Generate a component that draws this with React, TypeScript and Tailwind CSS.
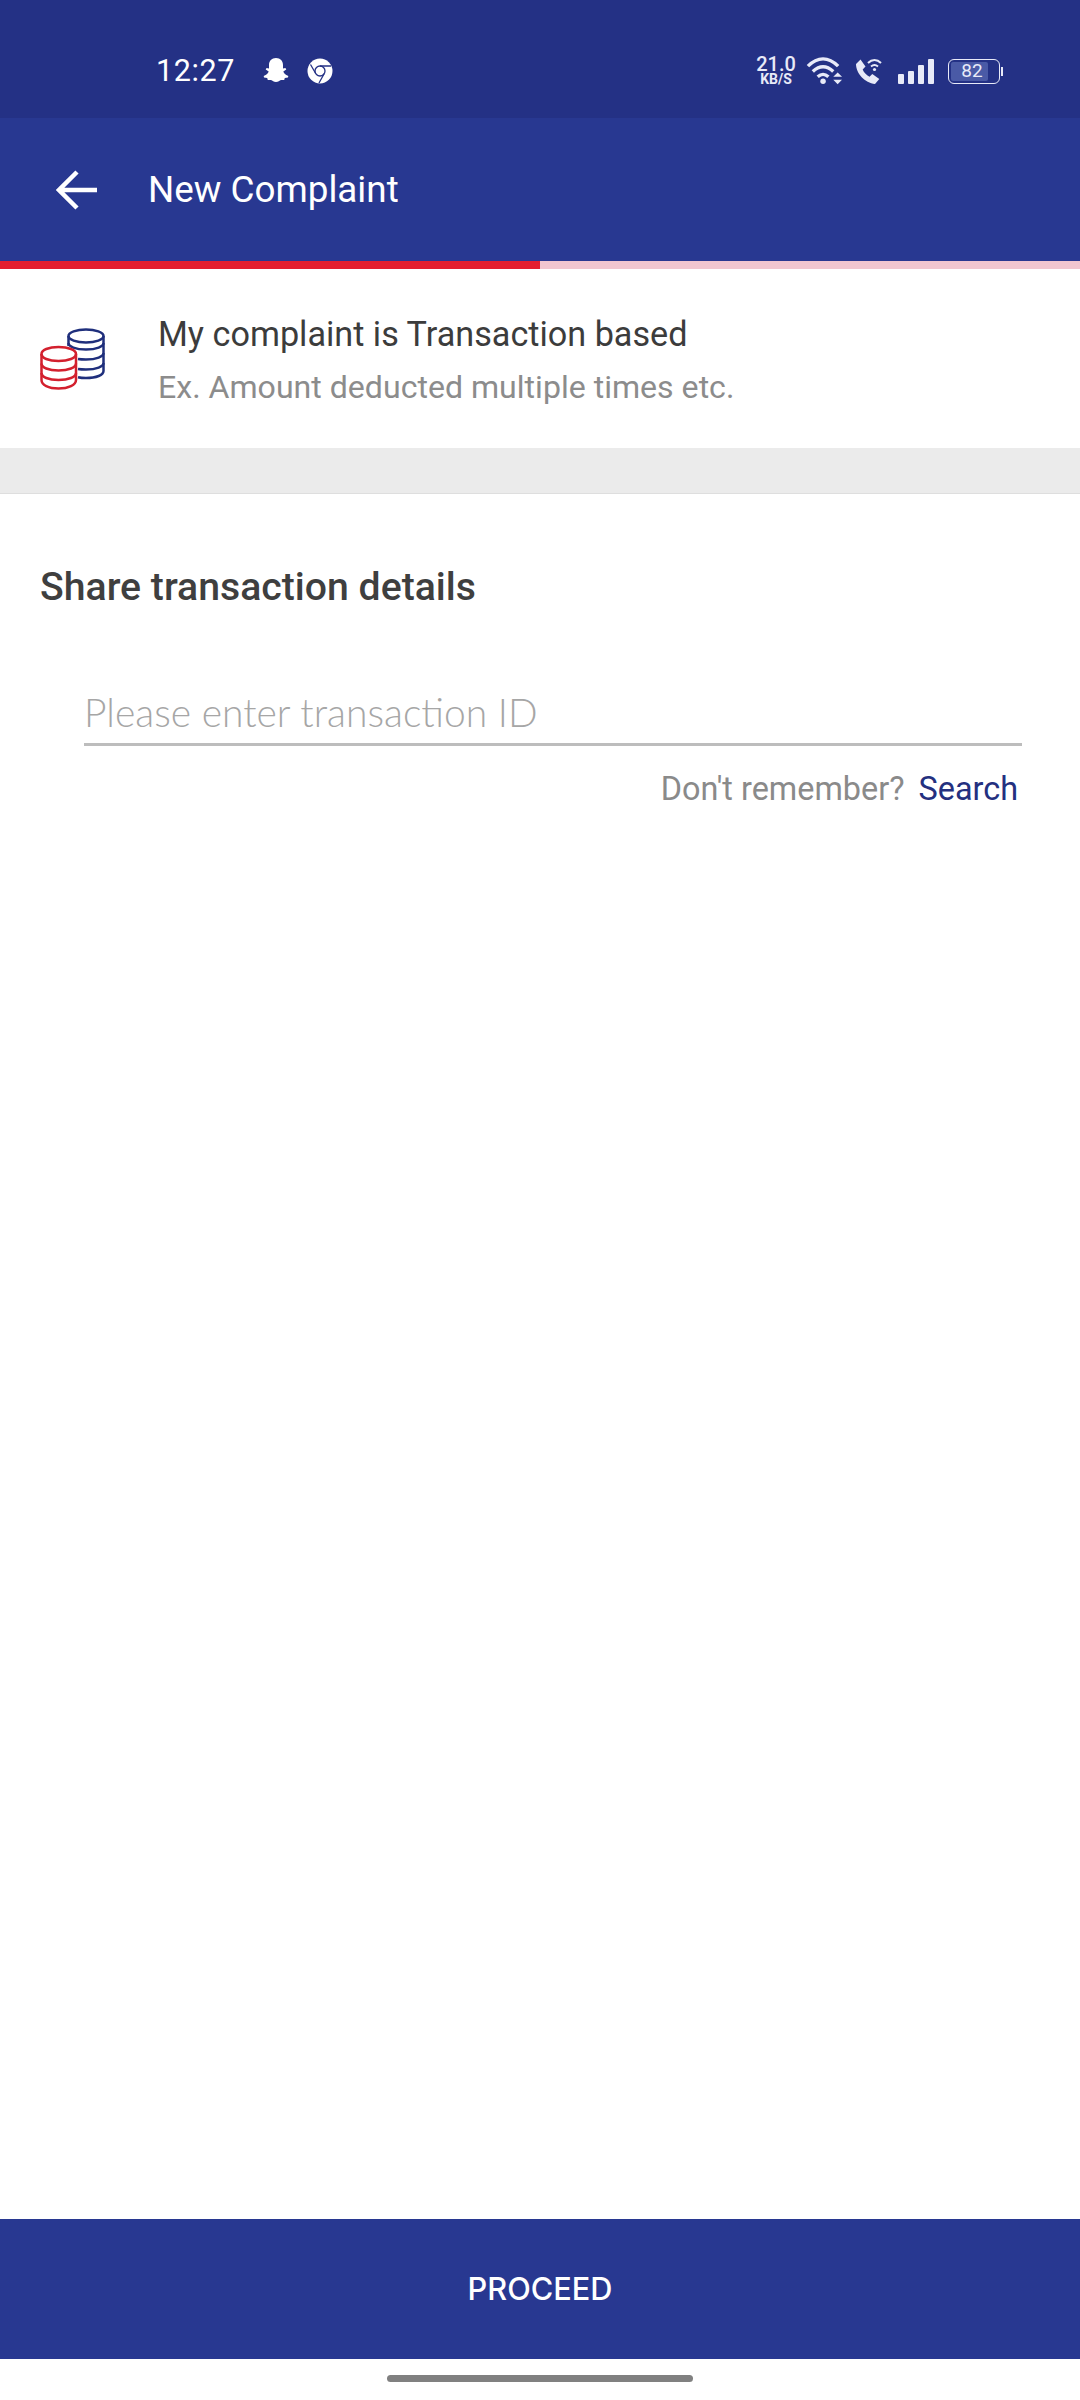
export default function App() {
  return (
    <div className="w-[1080px] h-[2400px] flex flex-col bg-white font-['Roboto',sans-serif] overflow-hidden">
      {/* status bar */}
      <div className="h-[118px] bg-[#243185] flex items-center pl-[156px] pr-[77px] pt-[24px] text-white">
        <span className="text-[30.500px] leading-none tracking-[0.6px] w-[80px]">12:27</span>
        <svg viewBox="0 0 28 28" className="w-[28px] h-[28px] ml-[26px]" fill="#fff">
          <path d="M14 1c4.400 0 7 3 7 7v3.600l2.400-.5.900 1.400-3 2c.6 1.800 2 3.200 5 4.400l-.3 1.500-3.200.7-.6 2-3.200-.2c-1.400.3-2.800 2.100-5 2.100s-3.600-1.800-5-2.100l-3.200.2-.6-2-3.200-.7-.3-1.500c3-1.200 4.400-2.600 5-4.400l-3-2 .9-1.400 2.400.5V8c0-4 2.600-7 7-7z" />
        </svg>
        <svg viewBox="0 0 26 26" className="w-[26px] h-[26px] ml-[17px]">
          <circle cx="13" cy="13" r="12.500" fill="#fff" />
          <circle cx="13" cy="13" r="5" fill="none" stroke="#243185" strokeWidth="1.300" />
          <path d="M13 8h11M8.700 15.500 3.500 6.500M17.300 15.500 12 25" stroke="#243185" strokeWidth="1.300" fill="none" />
        </svg>

        <div className="ml-auto flex items-center">
          <div className="flex flex-col items-center text-[#e8eaf8] font-medium w-[38px]">
            <span className="text-[20px] leading-[16px]">21.0</span>
            <span className="text-[14px] leading-[14px] font-bold">KB/S</span>
          </div>
          <svg viewBox="0 0 38 30" className="w-[37px] h-[30px] ml-[11px]" fill="none" stroke="#e8eaf8" strokeWidth="3.500">
            <path d="M2 10C12 0 23 0 33 10" />
            <path d="M7 15.500C14 9 21 9 28 15.500" />
            <path d="M12 21c4-3.500 7-3.500 11 0" />
            <circle cx="17.500" cy="25.500" r="2.800" fill="#e8eaf8" stroke="none" />
            <path d="m28 21 4.500-4.500 4.500 4.500zM28 24h9l-4.500 4.500z" fill="#e8eaf8" stroke="none" />
          </svg>
          <svg viewBox="0 0 27 27" className="w-[27px] h-[27px] ml-[12px]" fill="none" stroke="#e8eaf8">
            <path d="M1 6 5.500 1.500l5 7-2.800 3c1.200 3 3.500 5.500 6.800 7.300l2.800-2.800 7 5L20 26C10 25 1 15.500 1 6z" fill="#e8eaf8" stroke="none" />
            <path d="M13 5c4-4 9-4 13 0M16 8.500c2.400-2 4.600-2 7 0" strokeWidth="2" />
            <circle cx="19.500" cy="11.500" r="1.600" fill="#e8eaf8" stroke="none" />
          </svg>
          <div className="flex items-end gap-[4px] h-[25px] ml-[16px]">
            <div className="w-[6px] h-[10px] rounded-[1px] bg-[#e8eaf8]" />
            <div className="w-[6px] h-[13px] rounded-[1px] bg-[#e8eaf8]" />
            <div className="w-[6px] h-[19px] rounded-[1px] bg-[#e8eaf8]" />
            <div className="w-[6px] h-[25px] rounded-[1px] bg-[#e8eaf8]" />
          </div>
          <div className="flex items-center ml-[14px]">
            <div className="w-[52px] h-[25px] rounded-[6px] border-[1.500px] border-[#e8eaf8] p-[2px]">
              <div className="w-[37px] h-full rounded-[2px] bg-[#4a5aa6] text-[#e8eaf8] text-[19px] leading-[18px] text-center pl-[5px]">82</div>
            </div>
            <div className="w-[2px] h-[9px] bg-[#e8eaf8] ml-[1px]" />
          </div>
        </div>
      </div>

      {/* app bar */}
      <div className="h-[143px] bg-[#283891] flex items-center pl-[56px]">
        <svg viewBox="0 0 42 42" className="w-[42px] h-[42px]" fill="none" stroke="#fff" strokeWidth="4.500">
          <path d="M41 21H3M21 3 3 21l18 18" />
        </svg>
        <span className="ml-[50px] pt-[2px] text-[36.800px] leading-none text-white">New Complaint</span>
      </div>

      {/* progress */}
      <div className="h-[8px] flex bg-[#f0c6d0]">
        <div className="w-1/2 bg-[#e41e2f]" />
      </div>

      {/* complaint type */}
      <div className="h-[179px] flex items-center pl-[40px]">
        <svg viewBox="0 0 65 62" className="w-[65px] h-[62px]" fill="none" strokeWidth="2.500">
          <g stroke="#1f2f7c">
            <ellipse cx="46" cy="8" rx="17.500" ry="6.500" />
            <path d="M28.500 8v10M63.500 8v35c0 4-7 7-17.500 7-3 0-5.500-.2-8-.8" />
            <path d="M28.500 15c0 3.500 7 6.500 17.500 6.500S63.500 18.500 63.500 15" />
            <path d="M38 31c2.500.4 5 .5 8 .5 10.500 0 17.500-3 17.500-6.500" />
            <path d="M38 41c2.500.4 5 .5 8 .5 10.500 0 17.500-3 17.500-6.500" />
          </g>
          <g stroke="#d3202e">
            <path d="M1.500 26c0-4 7-7 17-7s17.500 3 17.500 7v26c0 5-7.500 8.500-17.500 8.500S1.500 57 1.500 52z" fill="#fff" />
            <path d="M1.500 26c0 4 7 7 17 7s17.500-3 17.500-7M1.500 35.500c0 4 7 7 17 7s17.500-3 17.500-7M1.500 45c0 4 7 7 17 7s17.500-3 17.500-7" />
          </g>
        </svg>
        <div className="ml-[53px] flex flex-col gap-[19px] pt-[3px]">
          <span className="text-[34.200px] leading-[34px] text-[#3c3c3c]">My complaint is Transaction based</span>
          <span className="text-[32.100px] leading-[34px] text-[#8c8c8c]">Ex. Amount deducted multiple times etc.</span>
        </div>
      </div>

      <div className="h-[46px] bg-[#ebebeb] border-b border-[#dedede]" />

      {/* transaction details */}
      <div className="flex-1 flex flex-col">
        <h2 className="mt-[72px] ml-[40px] text-[39.200px] leading-[42px] font-medium text-[#3f3f3f]">Share transaction details</h2>
        <div className="mt-[81px] ml-[84px] mr-[58px] border-b-[3px] border-[#bdbdbd] pb-[8px]">
          <input
            type="text"
            placeholder="Please enter transaction ID"
            className="w-full h-[46px] outline-none bg-transparent font-['Lato',sans-serif] font-light text-[39px] leading-[46px] text-[#333] placeholder:text-[#a6a6a6]"
          />
        </div>
        <div className="mt-[25px] mr-[62px] flex justify-end items-baseline gap-[14px] text-[32.400px] leading-[36px]">
          <span className="text-[#8a8a8a]">Don't remember?</span>
          <span className="text-[#24307f]">Search</span>
        </div>
      </div>

      {/* bottom action */}
      <button className="h-[140px] bg-[#283891] text-white text-[30.700px] leading-none font-medium font-['Inter',sans-serif]">PROCEED</button>
      <div className="h-[41px] flex justify-center pt-[16px]">
        <div className="w-[306px] h-[7px] rounded-full bg-[#808080]" />
      </div>
    </div>
  );
}
